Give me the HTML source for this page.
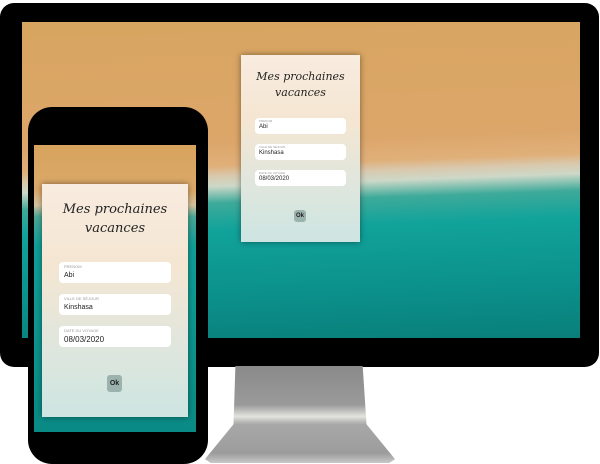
<!DOCTYPE html>
<html><head><meta charset="utf-8"><style>
*{margin:0;padding:0;box-sizing:border-box}
body{width:600px;height:464px;background:#fff;position:relative;overflow:hidden;font-family:"Liberation Sans",sans-serif}
.abs{position:absolute}
.mon{left:0;top:3px;width:599px;height:364px;background:#000;border-radius:14px}
.scr{left:22px;top:22px;width:558px;height:316px;background:linear-gradient(178deg,#d8a560 0%,#dca66a 38%,#e0b07a 45%,#d9c9ae 48%,#cdd8c8 51%,#3eaa9a 56%,#11a39b 64%,#0b8f8a 85%,#0a7f7a 100%)}
.stand{left:205px;top:366px;width:190px;height:97px;background:linear-gradient(180deg,#8a8a8a 0%,#9a9a9a 40%,#e2e4de 52%,#a8a8a8 60%,#9c9c9c 90%,#c8c8c8 100%);clip-path:polygon(16% 0,83% 0,85% 60%,100% 96%,97% 100%,3% 100%,0 96%,15% 60%)}
.phone{left:28px;top:107px;width:180px;height:357px;background:#000;border-radius:24px}
.pscr{left:34px;top:145px;width:162px;height:287px;background:linear-gradient(180deg,#d7a35d 0%,#dba96a 16%,#d8c4a0 21%,#4aa896 25%,#119f98 35%,#0a8a85 100%)}
.card{background:linear-gradient(180deg,#f8ece0 0%,#f5e6d2 35%,#e2e6dc 65%,#cde5e2 100%);box-shadow:0 0 6px rgba(0,0,0,.45)}
.t{text-align:center;font-family:"DejaVu Serif","Liberation Serif",serif;font-style:italic;color:#222}
.f{position:absolute;background:#fff;border-radius:4px}
.f i{display:block;font-style:normal;color:#999}
.f b{display:block;font-weight:normal;color:#222}
.ok{position:absolute;background:#9cb3ad;border-radius:3px;color:#222;font-weight:bold;text-align:center}
</style></head><body>
<div class="abs mon"></div>
<div class="abs scr"></div>
<div class="abs card" style="left:241px;top:55px;width:119px;height:187px">
 <div class="t" style="position:absolute;top:14px;width:100%;font-size:11px;line-height:16px">Mes prochaines<br>vacances</div>
 <div class="f" style="left:14px;top:63px;width:91px;height:16px;padding:1px 4px"><i style="font-size:3px;line-height:4px">PRENOM</i><b style="font-size:6px;line-height:9px">Abi</b></div>
 <div class="f" style="left:14px;top:89px;width:91px;height:16px;padding:1px 4px"><i style="font-size:3px;line-height:4px">VILLE DE SÉJOUR</i><b style="font-size:6px;line-height:9px">Kinshasa</b></div>
 <div class="f" style="left:14px;top:115px;width:91px;height:16px;padding:1px 4px"><i style="font-size:3px;line-height:4px">DATE DU VOYAGE</i><b style="font-size:6px;line-height:9px">08/03/2020</b></div>
 <div class="ok" style="left:53px;top:155px;width:12px;height:12px;font-size:6px;line-height:12px">Ok</div>
</div>
<div class="abs stand"></div>
<div class="abs phone"></div>
<div class="abs pscr"></div>
<div class="abs card" style="left:42px;top:184px;width:146px;height:233px">
 <div class="t" style="position:absolute;top:16px;width:100%;font-size:13px;line-height:19px">Mes prochaines<br>vacances</div>
 <div class="f" style="left:17px;top:78px;width:112px;height:21px;padding:2px 5px"><i style="font-size:4px;line-height:6px">PRENOM</i><b style="font-size:7px;line-height:11px">Abi</b></div>
 <div class="f" style="left:17px;top:110px;width:112px;height:21px;padding:2px 5px"><i style="font-size:4px;line-height:6px">VILLE DE SÉJOUR</i><b style="font-size:7px;line-height:11px">Kinshasa</b></div>
 <div class="f" style="left:17px;top:142px;width:112px;height:21px;padding:2px 5px"><i style="font-size:4px;line-height:6px">DATE DU VOYAGE</i><b style="font-size:8px;line-height:11px">08/03/2020</b></div>
 <div class="ok" style="left:65px;top:191px;width:15px;height:17px;font-size:7px;line-height:17px">Ok</div>
</div>
</body></html>
